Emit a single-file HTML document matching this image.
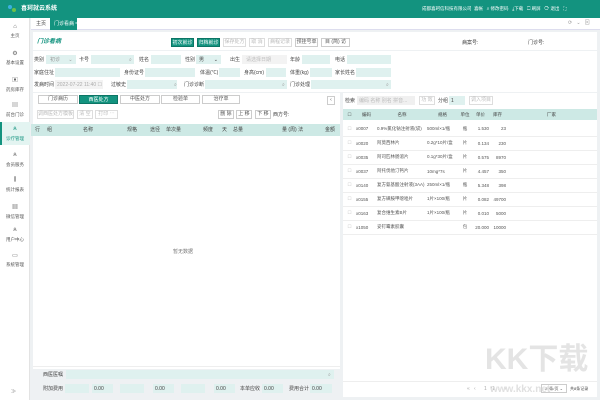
<!DOCTYPE html><html><head><meta charset="utf-8"><style>
*{margin:0;padding:0;box-sizing:border-box}
body{width:600px;height:400px;overflow:hidden;background:#eef1f3;font-family:"Liberation Sans","Noto Sans CJK SC",sans-serif;font-size:5px;color:#444;position:relative}
.a{position:absolute}
.t{position:absolute;white-space:nowrap;line-height:1}
.in{position:absolute;background:#dff1ef;height:9px}
.btn{position:absolute;border:1px solid #ccc;background:#fff;height:9px;line-height:7px;text-align:center;white-space:nowrap;color:#555}
.pb{position:absolute;background:#13937f;color:#fff;height:9px;line-height:9px;text-align:center;white-space:nowrap;border:1px solid #0c7565}
.dis{color:#bbb;border-color:#ddd}
.nav{position:absolute;left:0;width:30px;text-align:center;color:#555;font-size:4.5px}
.nav i{display:block;font-style:normal;font-size:6px;margin-bottom:3px;color:#666}
table{border-collapse:collapse}
</style></head><body>
<div class="a" style="left:0;top:0;width:600px;height:18px;background:#13937f"></div>
<div class="a" style="left:8px;top:5px;width:4px;height:4px;background:#3bb0e0;border-radius:2px"></div>
<div class="a" style="left:12px;top:8px;width:4px;height:4px;background:#6cc04a;border-radius:2px"></div>
<div class="t" style="left:21px;top:6px;color:#fff;font-size:6px;font-weight:bold">喜珂就云系统</div>
<div class="t" style="left:422px;top:7px;color:#fff;font-size:4.5px">成都喜珂信科技有限公司&nbsp;&nbsp;喜帐&nbsp;&nbsp;&nbsp;⌕ 修改密码&nbsp;&nbsp;&nbsp;⤓下载&nbsp;&nbsp;&nbsp;☐ 刷屏&nbsp;&nbsp;&nbsp;⟳ 退出&nbsp;&nbsp;&nbsp;⛶</div>
<div class="a" style="left:0;top:18px;width:30px;height:382px;background:#fff;border-right:1px solid #e3e3e3"></div>
<div class="a" style="left:0;top:122px;width:30px;height:23px;background:#e3f4f1;border-left:2px solid #13937f"></div>
<div class="nav" style="top:24px"><i>⌂</i>主页</div>
<div class="nav" style="top:50px"><i>⚙</i>基本设置</div>
<div class="nav" style="top:75px"><i>▣</i>药房库存</div>
<div class="nav" style="top:100px"><i>▤</i>前台门诊</div>
<div class="nav" style="top:126px;color:#13937f"><i style="color:#13937f">ጰ</i>诊疗管理</div>
<div class="nav" style="top:152px"><i>ጰ</i>会员服务</div>
<div class="nav" style="top:177px"><i>⫼</i>统计报表</div>
<div class="nav" style="top:202px"><i>▦</i>微信管理</div>
<div class="nav" style="top:227px"><i>ጰ</i>用户中心</div>
<div class="nav" style="top:252px"><i>▭</i>系统管理</div>
<div class="t" style="left:11px;top:390px;color:#888">≫</div>
<div class="a" style="left:31px;top:18px;width:569px;height:12px;background:#fff;border-bottom:1px solid #dde"></div>
<div class="t" style="left:36px;top:22px">主页</div>
<div class="a" style="left:50px;top:18px;width:27px;height:12px;background:#13937f"></div>
<div class="t" style="left:54px;top:22px;color:#fff">门诊看病 ˣ</div>
<div class="t" style="left:568px;top:21px;color:#999">⟳&nbsp;&nbsp;&nbsp;⌄&nbsp;&nbsp;&nbsp;⊠</div>
<div class="a" style="left:33px;top:32px;width:564px;height:18px;background:#fff"></div>
<div class="t" style="left:37px;top:39px;color:#13937f;font-size:6px;font-style:italic;font-weight:bold">门诊看病</div>
<div class="pb" style="left:171px;top:38px;width:23px">初次就诊</div>
<div class="pb" style="left:197px;top:38px;width:23px">归档就诊</div>
<div class="btn dis" style="left:223px;top:38px;width:23px">保存处方</div>
<div class="btn dis" style="left:249px;top:38px;width:16px">取 消</div>
<div class="btn dis" style="left:268px;top:38px;width:24px">病程记录</div>
<div class="btn" style="left:295px;top:38px;width:23px">预挂号单</div>
<div class="btn" style="left:321px;top:38px;width:29px">目 (简) 访</div>
<div class="t" style="left:462px;top:41px">病案号:</div>
<div class="t" style="left:528px;top:41px">门诊号:</div>
<div class="a" style="left:33px;top:51px;width:564px;height:41px;background:#fff"></div>
<div class="t" style="left:34px;top:58px">类别</div><div class="in" style="left:46px;top:55px;width:30px"></div><div class="t" style="left:50px;top:58px;color:#999">初诊&nbsp;&nbsp;&nbsp;&nbsp;&nbsp;&nbsp;⌄</div>
<div class="t" style="left:79px;top:58px">卡号</div><div class="in" style="left:91px;top:55px;width:43px"></div><div class="t" style="left:129px;top:58px;color:#999">⌕</div>
<div class="t" style="left:139px;top:58px">姓名</div><div class="in" style="left:151px;top:55px;width:30px"></div>
<div class="t" style="left:185px;top:58px">性别</div><div class="in" style="left:196px;top:55px;width:25px"></div><div class="t" style="left:199px;top:58px">男&nbsp;&nbsp;&nbsp;&nbsp;&nbsp;&nbsp;&nbsp;⌄</div>
<div class="t" style="left:230px;top:58px">出生</div><div class="in" style="left:242px;top:55px;width:45px;background:#f3f3f3"></div><div class="t" style="left:246px;top:58px;color:#bbb">请选择日期</div>
<div class="t" style="left:290px;top:58px">年龄</div><div class="in" style="left:302px;top:55px;width:28px"></div>
<div class="t" style="left:335px;top:58px">电话</div><div class="in" style="left:347px;top:55px;width:44px"></div>
<div class="t" style="left:34px;top:71px">家庭住址</div><div class="in" style="left:55px;top:68px;width:65px"></div>
<div class="t" style="left:124px;top:71px">身份证号</div><div class="in" style="left:145px;top:68px;width:50px"></div>
<div class="t" style="left:200px;top:71px">体温(℃)</div><div class="in" style="left:219px;top:68px;width:21px"></div>
<div class="t" style="left:244px;top:71px">身高(cm)</div><div class="in" style="left:266px;top:68px;width:20px"></div>
<div class="t" style="left:290px;top:71px">体重(kg)</div><div class="in" style="left:310px;top:68px;width:22px"></div>
<div class="t" style="left:335px;top:71px">家长姓名</div><div class="in" style="left:356px;top:68px;width:35px"></div>
<div class="t" style="left:34px;top:83px">发病时间</div><div class="in" style="left:55px;top:80px;width:48px;background:#f3f3f3"></div><div class="t" style="left:57px;top:83px;color:#aaa">2022-07-22 11:40 ☐</div>
<div class="t" style="left:111px;top:83px">过敏史</div><div class="in" style="left:127px;top:80px;width:50px"></div><div class="t" style="left:174px;top:83px;color:#999">⌕</div>
<div class="t" style="left:184px;top:83px">门诊诊断</div><div class="in" style="left:205px;top:80px;width:82px"></div><div class="t" style="left:282px;top:83px;color:#999">⌕</div>
<div class="t" style="left:290px;top:83px">门诊处理</div><div class="in" style="left:311px;top:80px;width:80px"></div><div class="t" style="left:386px;top:83px;color:#999">⌕</div>
<div class="a" style="left:33px;top:93px;width:307px;height:276px;background:#fff"></div>
<div class="btn" style="left:38px;top:95px;width:40px">门诊病历</div>
<div class="pb" style="left:79px;top:95px;width:39px">西医处方</div>
<div class="btn" style="left:120px;top:95px;width:40px">中医处方</div>
<div class="btn" style="left:161px;top:95px;width:39px">检验单</div>
<div class="btn" style="left:202px;top:95px;width:38px">治疗单</div>
<div class="btn" style="left:327px;top:96px;width:8px">‹</div>
<div class="btn dis" style="left:37px;top:110px;width:37px">调西医处方模板</div>
<div class="btn dis" style="left:77px;top:110px;width:16px">清 空</div>
<div class="btn dis" style="left:95px;top:110px;width:23px">打印 ⋯</div>
<div class="btn" style="left:218px;top:110px;width:16px">删 除</div>
<div class="btn" style="left:236px;top:110px;width:16px">上 移</div>
<div class="btn" style="left:255px;top:110px;width:16px">下 移</div>
<div class="t" style="left:273px;top:113px">西方号:</div>
<div class="a" style="left:31px;top:124px;width:309px;height:12px;background:#cde9e5"></div>
<div class="t" style="left:35px;top:128px">行&nbsp;&nbsp;&nbsp;&nbsp;&nbsp;组</div>
<div class="t" style="left:83px;top:128px">名称</div><div class="t" style="left:127px;top:128px">规格</div><div class="t" style="left:150px;top:128px">途径</div><div class="t" style="left:166px;top:128px">单次量</div><div class="t" style="left:203px;top:128px">频度</div><div class="t" style="left:222px;top:128px">天</div><div class="t" style="left:233px;top:128px">总量</div><div class="t" style="left:282px;top:128px">量 (周) 法</div><div class="t" style="left:325px;top:128px">金额</div>
<div class="t" style="left:173px;top:250px;color:#777">暂无数据</div>
<div class="a" style="left:33px;top:366px;width:307px;height:1px;background:#eee"></div>
<div class="t" style="left:43px;top:373px">西医医嘱</div><div class="in" style="left:66px;top:370px;width:268px"></div><div class="t" style="left:328px;top:373px;color:#999">⌕</div>
<div class="t" style="left:43px;top:387px">附加费用</div>
<div class="in" style="left:65px;top:384px;width:24px"></div><div class="in" style="left:92px;top:384px;width:21px"></div><div class="t" style="left:94px;top:387px">0.00</div>
<div class="in" style="left:120px;top:384px;width:24px"></div><div class="in" style="left:153px;top:384px;width:21px"></div><div class="t" style="left:155px;top:387px">0.00</div>
<div class="in" style="left:181px;top:384px;width:24px"></div><div class="in" style="left:214px;top:384px;width:21px"></div><div class="t" style="left:216px;top:387px">0.00</div>
<div class="t" style="left:240px;top:387px">本单应收</div><div class="in" style="left:262px;top:384px;width:21px"></div><div class="t" style="left:264px;top:387px">0.00</div>
<div class="t" style="left:289px;top:387px">费用合计</div><div class="in" style="left:310px;top:384px;width:22px"></div><div class="t" style="left:312px;top:387px">0.00</div>
<div class="a" style="left:343px;top:93px;width:254px;height:304px;background:#fff"></div>
<div class="t" style="left:345px;top:99px">检索</div><div class="in" style="left:357px;top:96px;width:58px;background:#f0f0f0"></div><div class="t" style="left:359px;top:99px;color:#bbb">编码 名称 别名 拼音...</div>
<div class="btn dis" style="left:419px;top:96px;width:16px">功 效</div>
<div class="t" style="left:438px;top:99px">分组</div><div class="in" style="left:449px;top:96px;width:16px"></div><div class="t" style="left:451px;top:99px">1</div>
<div class="btn dis" style="left:469px;top:96px;width:24px">调入项目</div>
<div class="a" style="left:343px;top:109px;width:254px;height:11px;background:#cde9e5"></div>
<table class="a" style="left:343px;top:109px;width:254px;font-size:4.5px">
<tr style="height:11px"><td style="width:13px;text-align:center">☐</td><td style="width:21px;text-align:center">编码</td><td style="width:50px;text-align:center">名称</td><td style="width:31px;text-align:center">规格</td><td style="width:14px;text-align:center">单位</td><td style="width:17px;text-align:center">单价</td><td style="width:17px;text-align:center">库存</td><td style="text-align:center">厂家</td></tr>
</table>
<div class="a" style="left:343px;top:122px;width:254px;font-size:4.5px;color:#555">
<table style="width:254px">
<tbody>
<tr style="height:14px;border-bottom:1px solid #eee"><td style="width:13px;text-align:center;color:#bbb">☐</td><td style="width:21px">x0007</td><td style="width:50px">0.9%氯化钠注射液(袋)</td><td style="width:31px">500ml×1/瓶</td><td style="width:14px;text-align:center">瓶</td><td style="width:17px;text-align:right">1.530</td><td style="width:17px;text-align:right">23</td><td></td></tr>
<tr style="height:14px;border-bottom:1px solid #eee"><td style="text-align:center;color:#bbb">☐</td><td>x0020</td><td>阿莫西林片</td><td>0.2g*10片/盒</td><td style="text-align:center">片</td><td style="text-align:right">0.134</td><td style="text-align:right">230</td><td></td></tr>
<tr style="height:14px;border-bottom:1px solid #eee"><td style="text-align:center;color:#bbb">☐</td><td>x0035</td><td>阿司匹林肠溶片</td><td>0.1g*30片/盒</td><td style="text-align:center">片</td><td style="text-align:right">0.575</td><td style="text-align:right">8970</td><td></td></tr>
<tr style="height:14px;border-bottom:1px solid #eee"><td style="text-align:center;color:#bbb">☐</td><td>x0037</td><td>阿托伐他汀钙片</td><td>10mg*7s</td><td style="text-align:center">片</td><td style="text-align:right">4.457</td><td style="text-align:right">350</td><td></td></tr>
<tr style="height:14px;border-bottom:1px solid #eee"><td style="text-align:center;color:#bbb">☐</td><td>x0140</td><td>复方氨基酸注射液(3AA)</td><td>250ml×1/瓶</td><td style="text-align:center">瓶</td><td style="text-align:right">5.348</td><td style="text-align:right">398</td><td></td></tr>
<tr style="height:14px;border-bottom:1px solid #eee"><td style="text-align:center;color:#bbb">☐</td><td>x0155</td><td>复方磺胺甲噁唑片</td><td>1片×100/瓶</td><td style="text-align:center">片</td><td style="text-align:right">0.082</td><td style="text-align:right">49700</td><td></td></tr>
<tr style="height:14px;border-bottom:1px solid #eee"><td style="text-align:center;color:#bbb">☐</td><td>x0163</td><td>复合维生素B片</td><td>1片×100/瓶</td><td style="text-align:center">片</td><td style="text-align:right">0.010</td><td style="text-align:right">5000</td><td></td></tr>
<tr style="height:14px;border-bottom:1px solid #eee"><td style="text-align:center;color:#bbb">☐</td><td>x1050</td><td>妥钉霉素胶囊</td><td></td><td style="text-align:center">包</td><td style="text-align:right">20.000</td><td style="text-align:right">10000</td><td></td></tr>
</tbody></table></div>
<div class="a" style="left:343px;top:381px;width:254px;height:1px;background:#eee"></div>
<div class="t" style="left:467px;top:387px;color:#aaa">«&nbsp;&nbsp;&nbsp;‹&nbsp;&nbsp;&nbsp;&nbsp;&nbsp;&nbsp;1&nbsp;&nbsp;&nbsp;/1&nbsp;&nbsp;›&nbsp;&nbsp;&nbsp;»</div>
<div class="btn" style="left:541px;top:384px;width:26px;font-size:4px">20条/页 ⌄</div>
<div class="t" style="left:570px;top:387px;font-size:4px">共8条记录</div>
<div class="t" style="left:485px;top:345px;font-size:30px;font-weight:bold;color:#e4e4e4">KK下载</div>
<div class="t" style="left:490px;top:385px;font-size:10px;font-weight:bold;color:#e0e0e0">www.kkx.net</div>
</body></html>
